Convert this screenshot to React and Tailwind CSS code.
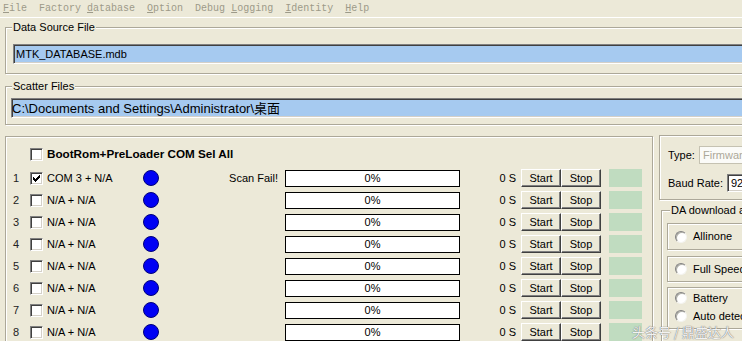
import React from "react";

const etched = "border border-[#aca899] shadow-[inset_1px_1px_0_#fff,1px_1px_0_#fff]";
const sunken =
  "border border-t-[#808080] border-l-[#808080] border-b-white border-r-white shadow-[inset_1px_1px_0_#404040,inset_-1px_-1px_0_#d4d0c8]";

function Check({ checked }) {
  return (
    <div className={"w-[13px] h-[13px] bg-white shrink-0 flex items-center justify-center " + sunken}>
      {checked && (
        <svg width="7" height="7" viewBox="0 0 7 7" shapeRendering="crispEdges">
          <path d="M0 2h1v1h1v1h1v-1h1v-1h1v-1h1v-1h1v3h-1v1h-1v1h-1v1h-1v1h-1v-1h-1v-1h-1z" fill="#000" />
        </svg>
      )}
    </div>
  );
}

function Radio({ label }) {
  return (
    <div className="flex items-center h-[18px]">
      <div className="w-[12px] h-[12px] rounded-full bg-white border border-t-[#808080] border-l-[#808080] border-b-[#f4f4f0] border-r-[#f4f4f0] shadow-[inset_1px_1px_0_#b0b0a8] shrink-0" />
      <span className="ml-[6px] text-[11px] text-black whitespace-nowrap">{label}</span>
    </div>
  );
}

function Btn({ children }) {
  return (
    <div className="w-[40px] h-[18px] bg-[#ece9d8] border border-t-white border-l-white border-b-[#404040] border-r-[#404040] shadow-[inset_-1px_-1px_0_#808080] flex items-center justify-center text-[11px] text-black shrink-0">
      {children}
    </div>
  );
}

function Row({ n, checked, label, status }) {
  return (
    <div className="h-[22px] flex items-center">
      <span className="w-[17px] pl-[7px] box-content text-[11px] text-[#222] shrink-0">{n}</span>
      <Check checked={checked} />
      <span className="ml-[4px] w-[96px] text-[11px] text-black shrink-0 whitespace-nowrap">{label}</span>
      <div className="w-[16px] h-[16px] rounded-full bg-[#0000f4] border border-[#00007a] shrink-0" />
      <div className="w-[126px] pr-[7px] text-right text-[11px] text-black shrink-0 whitespace-nowrap">{status}</div>
      <div className="w-[175px] h-[17px] bg-white border border-black shrink-0 flex items-center justify-center text-[11px] text-black">
        0%
      </div>
      <div className="w-[61px] pr-[5px] text-right text-[11px] text-black shrink-0">0 S</div>
      <Btn>Start</Btn>
      <Btn>Stop</Btn>
      <div className="ml-[8px] w-[33px] h-[18px] bg-[#c0dcc0] shrink-0" />
    </div>
  );
}

export default function App() {
  const rows = [
    { n: 1, checked: true, label: "COM 3 + N/A", status: "Scan Fail!" },
    { n: 2, label: "N/A + N/A" },
    { n: 3, label: "N/A + N/A" },
    { n: 4, label: "N/A + N/A" },
    { n: 5, label: "N/A + N/A" },
    { n: 6, label: "N/A + N/A" },
    { n: 7, label: "N/A + N/A" },
    { n: 8, label: "N/A + N/A" },
  ];
  return (
    <div className="relative w-[742px] h-[341px] overflow-hidden bg-[#ece9d8] font-['Liberation_Sans','Noto_Sans_CJK_SC',sans-serif] leading-none">
      {/* Menu bar */}
      <div className="h-[18px] border-b border-white flex items-center pl-[3px] gap-[12px] font-['Liberation_Mono',monospace] text-[10px] text-[#9d9a89] whitespace-nowrap">
        <span><span className="underline">F</span>ile</span>
        <span>Factory <span className="underline">d</span>atabase</span>
        <span><span className="underline">O</span>ption</span>
        <span>Debug <span className="underline">L</span>ogging</span>
        <span><span className="underline">I</span>dentity</span>
        <span><span className="underline">H</span>elp</span>
      </div>

      {/* Data Source File */}
      <div className={"relative mt-[9px] ml-[5px] w-[780px] h-[47px] " + etched}>
        <span className="absolute left-[6px] -top-[7px] px-[1px] bg-[#ece9d8] text-[11px] leading-[13px] text-black">
          Data Source File
        </span>
        <div className={"mt-[16px] ml-[7px] h-[20px] bg-[#a6caf0] flex items-center pl-[2px] text-[11px] text-black " + sunken}>
          MTK_DATABASE.mdb
        </div>
      </div>

      {/* Scatter Files */}
      <div className={"relative mt-[12px] ml-[5px] w-[780px] h-[39px] " + etched}>
        <span className="absolute left-[6px] -top-[7px] px-[1px] bg-[#ece9d8] text-[11px] leading-[13px] text-black">
          Scatter Files
        </span>
        <div className={"mt-[11px] ml-[5px] h-[20px] bg-[#a6caf0] flex items-center text-[13px] text-black " + sunken}>
          C:\Documents and Settings\Administrator\桌面
        </div>
      </div>

      {/* Bottom area */}
      <div className="mt-[10px] flex items-start">
        {/* Left panel */}
        <div className={"mt-[1px] ml-[5px] w-[648px] h-[220px] pt-[6px] shrink-0 " + etched}>
          <div className="h-[22px] flex items-center pl-[24px]">
            <Check />
            <span className="ml-[4px] text-[11.7px] font-bold text-black whitespace-nowrap">
              BootRom+PreLoader COM Sel All
            </span>
          </div>
          <div className="mt-[2px] flex flex-col">
            {rows.map((r) => (
              <Row key={r.n} {...r} />
            ))}
          </div>
        </div>

        {/* Right panel */}
        <div className="ml-[6px] w-[100px] flex flex-col shrink-0">
          <div className={"h-[65px] pl-[8px] " + etched}>
            <div className="mt-[10px] h-[18px] flex items-center">
              <span className="w-[31px] text-[11px] text-black shrink-0">Type:</span>
              <div className="w-[60px] h-[18px] bg-[#fbfbf8] border border-[#c5c2b2] flex items-center pl-[3px] text-[11px] text-[#aca899] shrink-0">
                Firmware
              </div>
            </div>
            <div className="mt-[10px] h-[18px] flex items-center">
              <span className="w-[59px] text-[11px] text-black shrink-0 whitespace-nowrap">Baud Rate:</span>
              <div className={"w-[40px] h-[18px] bg-white flex items-center pl-[3px] text-[11px] text-black shrink-0 " + sunken}>
                92
              </div>
            </div>
          </div>

          <div className={"relative mt-[10px] ml-[2px] h-[140px] " + etched}>
            <span className="absolute left-[8px] -top-[7px] px-[1px] bg-[#ece9d8] text-[11px] leading-[13px] text-black whitespace-nowrap">
              DA download all
            </span>
            <div className={"mt-[12px] ml-[5px] h-[27px] pl-[7px] flex items-center " + etched}>
              <Radio label="Allinone" />
            </div>
            <div className={"mt-[6px] ml-[5px] h-[26px] pl-[7px] flex items-center " + etched}>
              <Radio label="Full Speed" />
            </div>
            <div className={"mt-[5px] ml-[5px] h-[42px] pl-[7px] pt-[1px] " + etched}>
              <Radio label="Battery" />
              <Radio label="Auto detect" />
            </div>
          </div>
        </div>
      </div>

      {/* Watermark */}
      <div className="absolute left-[632px] top-[325px] text-[13px] leading-none text-white/90 font-['Noto_Sans_CJK_SC',sans-serif] whitespace-nowrap [text-shadow:0_0_1px_#777,0_0_1px_#777]">
        头条号 / 鼎盛达人
      </div>
    </div>
  );
}
